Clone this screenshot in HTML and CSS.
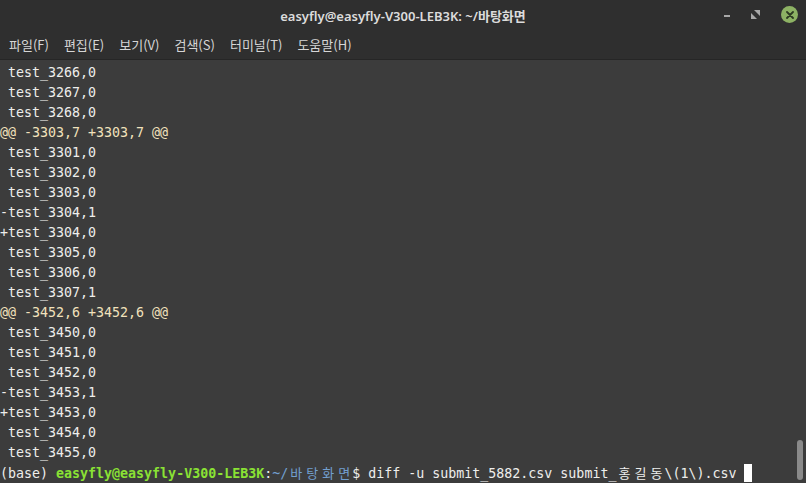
FILE: index.html
```html
<!DOCTYPE html>
<html lang="ko">
<head>
    <meta charset="UTF-8">
    <meta name="viewport" content="width=device-width, initial-scale=1.0">
    <title>easyfly@easyfly-V300-LEB3K: ~/바탕화면</title>
    <link rel="stylesheet" href="styles.css">
</head>
<body class="mainBody">
    <div class="window">
        <div class="titlebar">
            <div class="title">easyfly@easyfly-V300-LEB3K: ~/바탕화면</div>
            <div class="winButtons">
                <span class="minBtn"></span>
                <svg class="maxBtn" width="9" height="9" viewBox="0 0 9 9">
                    <path d="M3 0H9V6Z" fill="#a8a8a8"/>
                    <path d="M0 3V9H6Z" fill="#a8a8a8"/>
                </svg>
                <span class="closeBtn">
                    <svg width="8" height="8" viewBox="0 0 8 8">
                        <path d="M1 1L7 7M7 1L1 7" stroke="#2d3a22" stroke-width="1.8" stroke-linecap="round"/>
                    </svg>
                </span>
            </div>
        </div>
        <div class="menubar">
            <span class="menuItem">파일(F)</span>
            <span class="menuItem">편집(E)</span>
            <span class="menuItem">보기(V)</span>
            <span class="menuItem">검색(S)</span>
            <span class="menuItem">터미널(T)</span>
            <span class="menuItem">도움말(H)</span>
        </div>
        <div class="terminal">
            <div class="screen">
                <div class="line"> test_3266,0</div>
                <div class="line"> test_3267,0</div>
                <div class="line"> test_3268,0</div>
                <div class="line hunk">@@ -3303,7 +3303,7 @@</div>
                <div class="line"> test_3301,0</div>
                <div class="line"> test_3302,0</div>
                <div class="line"> test_3303,0</div>
                <div class="line">-test_3304,1</div>
                <div class="line">+test_3304,0</div>
                <div class="line"> test_3305,0</div>
                <div class="line"> test_3306,0</div>
                <div class="line"> test_3307,1</div>
                <div class="line hunk">@@ -3452,6 +3452,6 @@</div>
                <div class="line"> test_3450,0</div>
                <div class="line"> test_3451,0</div>
                <div class="line"> test_3452,0</div>
                <div class="line">-test_3453,1</div>
                <div class="line">+test_3453,0</div>
                <div class="line"> test_3454,0</div>
                <div class="line"> test_3455,0</div>
                <div class="line">(base) <span class="userHost">easyfly@easyfly-V300-LEB3K</span>:<span class="path">~/<span class="wide">바</span><span class="wide">탕</span><span class="wide">화</span><span class="wide">면</span></span>$ diff -u submit_5882.csv submit_<span class="wide">홍</span><span class="wide">길</span><span class="wide">동</span>\(1\).csv <span class="cursor"></span></div>
            </div>
            <div class="scrollbar"><span class="thumb"></span></div>
        </div>
    </div>
</body>
</html>
```

FILE: styles.css
```css
html, body {
    margin: 0;
    padding: 0;
}
.mainBody {
    width: 806px;
    height: 483px;
    overflow: hidden;
    background-color: #3c3c3c;
}
.window {
    display: flex;
    flex-direction: column;
    height: 483px;
}
.titlebar {
    position: relative;
    height: 33px;
    display: flex;
    align-items: center;
    justify-content: center;
    background-color: #2f2f2f;
}
.title {
    font-family: "Noto Sans", "Noto Sans CJK KR", sans-serif;
    font-size: 13px;
    font-weight: 600;
    color: #dcdcdc;
    padding-bottom: 1px;
}
.winButtons {
    position: absolute;
    right: 8px;
    top: 6px;
    display: flex;
    align-items: center;
    gap: 21px;
}
.minBtn {
    display: block;
    width: 6px;
    height: 2px;
    background-color: #a8a8a8;
    margin-top: 2px;
}
.maxBtn {
    display: block;
}
.closeBtn {
    display: flex;
    align-items: center;
    justify-content: center;
    width: 17px;
    height: 17px;
    border-radius: 50%;
    background-color: #8db264;
}
.menubar {
    height: 27px;
    display: flex;
    align-items: center;
    gap: 15px;
    padding-left: 9px;
    background-color: #2f2f2f;
    border-bottom: 1px solid #262626;
    font-family: "Noto Sans CJK KR", "Noto Sans", sans-serif;
    font-size: 13px;
    color: #d6d6d6;
}
.menuItem {
    padding-bottom: 2px;
}
.terminal {
    flex: 1 0 auto;
    display: flex;
    background-color: #3c3c3c;
    padding-top: 3px;
}
.screen {
    flex: 1;
    font-family: "DejaVu Sans Mono", "Noto Sans CJK KR", monospace;
    font-size: 13.3px;
    color: #eeeeec;
}
.line {
    height: 20px;
    line-height: 20px;
    white-space: pre;
}
.hunk {
    color: #f2e2bc;
}
.userHost {
    color: #8ae234;
    font-weight: bold;
}
.path {
    color: #729fcf;
}
.wide {
    display: inline-block;
    width: 16px;
    text-align: center;
    font-family: "Noto Sans CJK KR", sans-serif;
    font-size: 13px;
}
.cursor {
    display: inline-block;
    width: 8px;
    height: 18px;
    vertical-align: -4px;
    background-color: #ffffff;
}
.scrollbar {
    width: 12px;
    display: flex;
    flex-direction: column;
    justify-content: flex-end;
    align-items: center;
    padding-bottom: 3px;
}
.thumb {
    display: block;
    width: 6px;
    height: 40px;
    border-radius: 3px;
    background-color: #8a8a8a;
}
```
